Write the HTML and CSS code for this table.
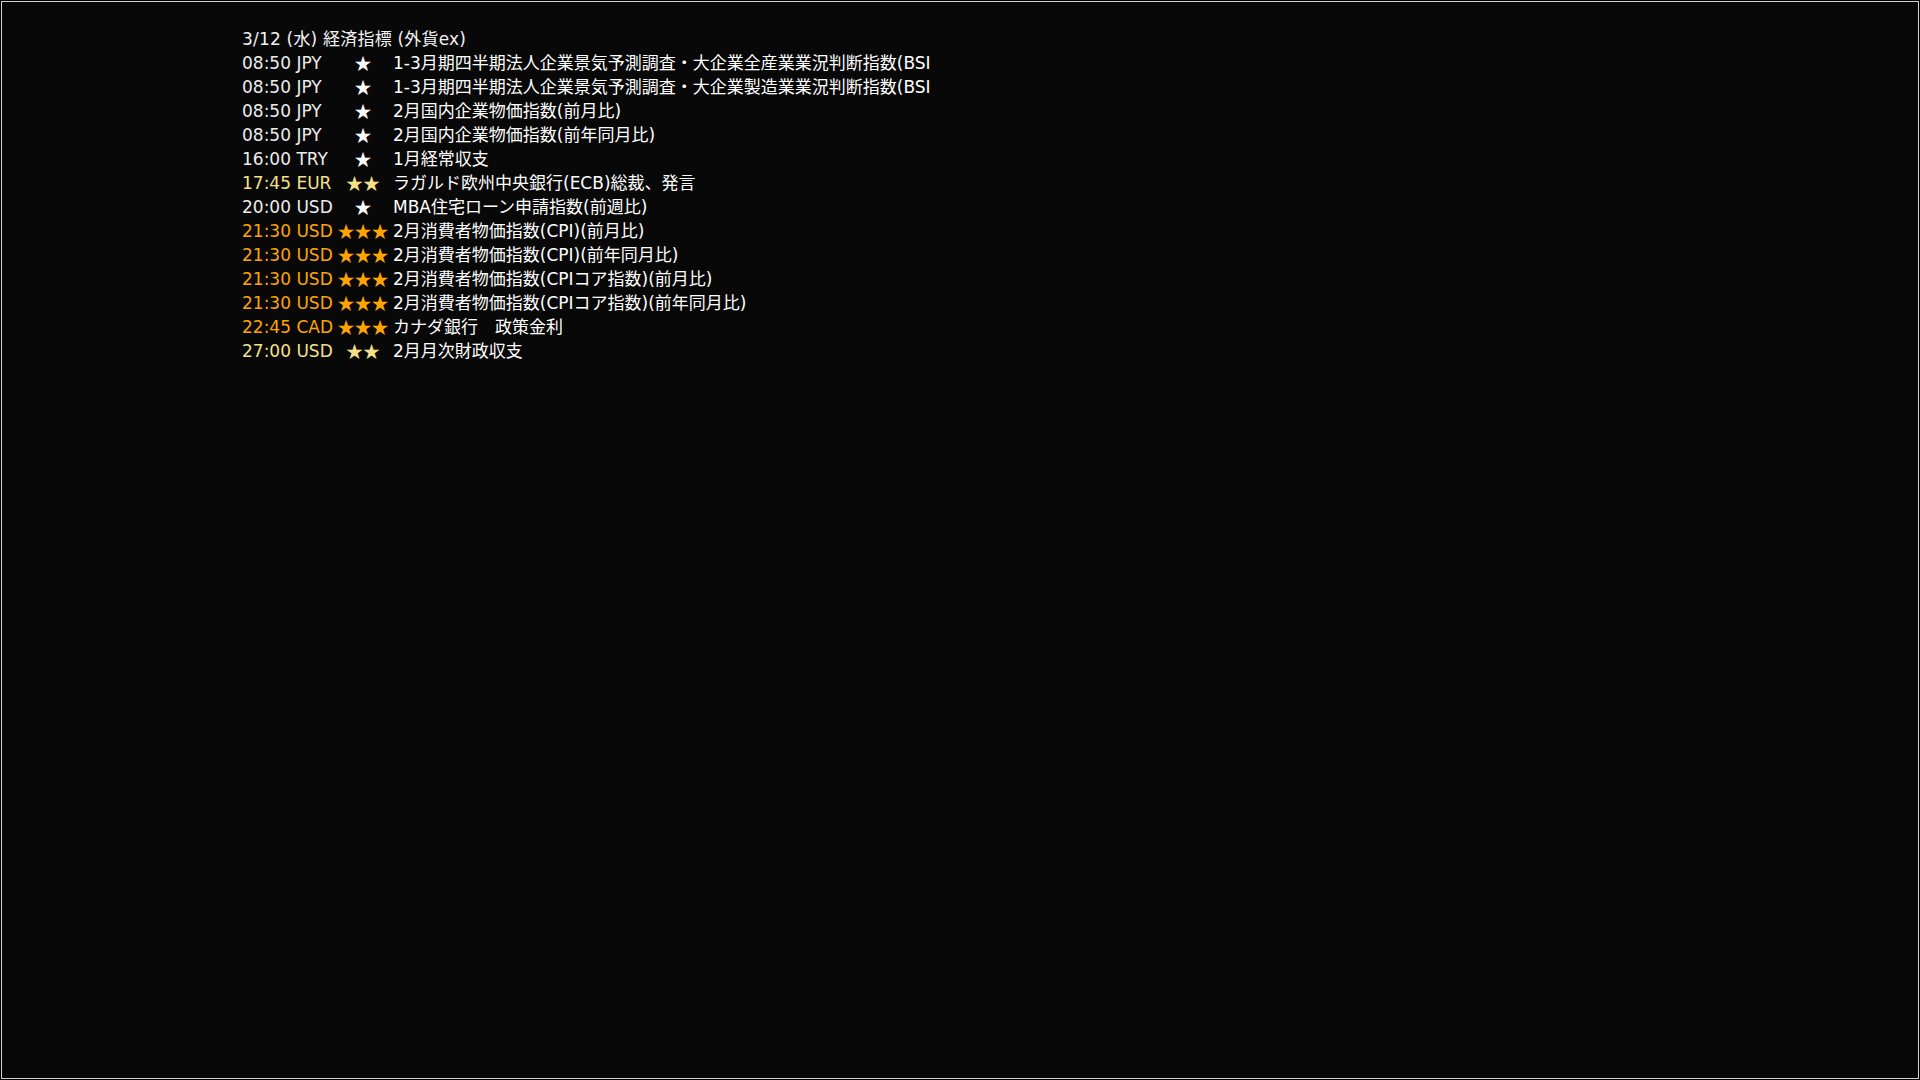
FILE: index.html
```html
<!DOCTYPE html>
<html lang="ja">
<head>
<meta charset="utf-8">
<title>経済指標</title>
<link rel="stylesheet" href="styles.css">
</head>
<body>
<div class="frame">
  <div class="list">
    <div class="title">3/12 (水) 経済指標 (外貨ex)</div>
    <div class="row r1"><span class="time">08:50 JPY</span><span class="stars">★</span><span class="desc">1-3月期四半期法人企業景気予測調査・大企業全産業業況判断指数(BSI</span></div>
    <div class="row r1"><span class="time">08:50 JPY</span><span class="stars">★</span><span class="desc">1-3月期四半期法人企業景気予測調査・大企業製造業業況判断指数(BSI</span></div>
    <div class="row r1"><span class="time">08:50 JPY</span><span class="stars">★</span><span class="desc">2月国内企業物価指数(前月比)</span></div>
    <div class="row r1"><span class="time">08:50 JPY</span><span class="stars">★</span><span class="desc">2月国内企業物価指数(前年同月比)</span></div>
    <div class="row r1"><span class="time">16:00 TRY</span><span class="stars">★</span><span class="desc">1月経常収支</span></div>
    <div class="row r2"><span class="time">17:45 EUR</span><span class="stars">★★</span><span class="desc">ラガルド欧州中央銀行(ECB)総裁、発言</span></div>
    <div class="row r1"><span class="time">20:00 USD</span><span class="stars">★</span><span class="desc">MBA住宅ローン申請指数(前週比)</span></div>
    <div class="row r3"><span class="time">21:30 USD</span><span class="stars">★★★</span><span class="desc">2月消費者物価指数(CPI)(前月比)</span></div>
    <div class="row r3"><span class="time">21:30 USD</span><span class="stars">★★★</span><span class="desc">2月消費者物価指数(CPI)(前年同月比)</span></div>
    <div class="row r3"><span class="time">21:30 USD</span><span class="stars">★★★</span><span class="desc">2月消費者物価指数(CPIコア指数)(前月比)</span></div>
    <div class="row r3"><span class="time">21:30 USD</span><span class="stars">★★★</span><span class="desc">2月消費者物価指数(CPIコア指数)(前年同月比)</span></div>
    <div class="row r3"><span class="time">22:45 CAD</span><span class="stars">★★★</span><span class="desc">カナダ銀行　政策金利</span></div>
    <div class="row r2"><span class="time">27:00 USD</span><span class="stars">★★</span><span class="desc">2月月次財政収支</span></div>
  </div>
</div>
</body>
</html>
```
FILE: styles.css
```css
html, body {
  margin: 0;
  padding: 0;
  background: #000;
}
body {
  padding: 1px;
  width: 1920px;
  height: 1080px;
  box-sizing: border-box;
  overflow: hidden;
}
.frame {
  box-sizing: border-box;
  width: 1918px;
  height: 1078px;
  border: 1px solid #d4d4d4;
  background: #080808;
  padding: 25px 0 0 240px;
}
.list {
  font-family: "DejaVu Sans", "Noto Sans CJK JP", sans-serif;
  font-size: 17px;
  line-height: 24px;
  color: #fff;
}
.title {
  color: #f2f2f2;
  letter-spacing: 0.2px;
}
.row {
  display: grid;
  grid-template-columns: 91px 56px auto;
  column-gap: 2px;
  white-space: nowrap;
}
.time {
  color: #ececec;
}
.stars {
  font-family: "Noto Sans CJK JP", sans-serif;
  text-align: center;
  font-size: 17px;
  letter-spacing: 0;
}
.r1 .stars { color: #ffffff; }
.r2 .time, .r2 .stars { color: #f5e08a; }
.r3 .time, .r3 .stars { color: #ffa500; }
.desc {
  color: #fff;
}
```
